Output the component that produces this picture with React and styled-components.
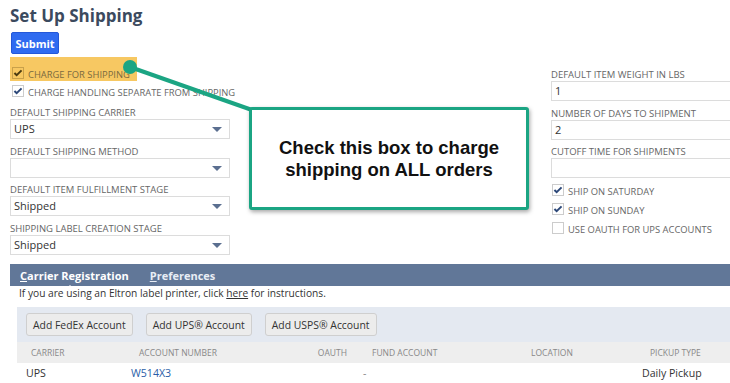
import React from 'react';
import styled, { createGlobalStyle } from 'styled-components';

const GlobalStyle = createGlobalStyle`
  html, body {
    margin: 0;
    padding: 0;
    background: #fff;
    overflow: hidden;
  }
  body {
    font-family: "Open Sans", "Noto Sans", sans-serif;
    color: #333;
  }
`;

const Page = styled.div`
  position: relative;
  width: 730px;
  height: 383px;
  overflow: hidden;
  padding-left: 10px;
  box-sizing: border-box;
`;

const Title = styled.h1`
  margin: 0;
  padding-top: 4px;
  font-size: 17px;
  line-height: 24px;
  font-weight: 700;
  color: #3b4a5e;
`;

const SubmitButton = styled.button`
  display: block;
  margin-top: 4px;
  margin-left: 1px;
  width: 48px;
  height: 22px;
  padding: 0;
  border: 1px solid #2458d8;
  border-radius: 2px;
  background: #2f6bf0;
  color: #fff;
  font-family: inherit;
  font-size: 11px;
  font-weight: 700;
`;

const Form = styled.div`
  display: flex;
  margin-top: 3px;
`;

const LeftColumn = styled.div`
  width: 220px;
`;

const RightColumn = styled.div`
  margin-left: auto;
  width: 190px;
  padding-top: 12px;
  margin-right: -11px;
`;

const Highlight = styled.div`
  width: 127px;
  height: 24px;
  background: #f7c862;
`;

const CheckRow = styled.div`
  display: flex;
  align-items: flex-end;
  box-sizing: border-box;
  height: ${p => p.$h || 19}px;
  padding-left: ${p => p.$indent || 0}px;
  padding-bottom: ${p => p.$pb || 0}px;
  font-size: 9.4px;
  line-height: 12px;
  color: ${p => (p.$dark ? '#7a6a40' : '#666')};
  white-space: nowrap;
`;

const Box = styled.span`
  flex: none;
  box-sizing: border-box;
  width: 12px;
  height: 12px;
  margin-right: 4px;
  margin-bottom: 2px;
  border: 1px solid ${p => (p.$dark ? '#c9a14a' : '#ccc')};
  background: ${p => (p.$dark ? 'transparent' : '#fff')};
  display: flex;
  align-items: center;
  justify-content: center;
`;

const Field = styled.div`
  margin-bottom: ${p => p.$mb ?? 6.5}px;
`;

const Label = styled.div`
  font-size: 9.5px;
  line-height: 12px;
  color: #666;
  white-space: nowrap;
`;

const Input = styled.div`
  position: relative;
  height: 18px;
  border: 1px solid #dcdcdc;
  background: #fff;
  font-size: 11px;
  line-height: 18px;
  padding-left: 3px;
  color: #333;
`;

const Arrow = styled.span`
  position: absolute;
  right: 7px;
  top: 7px;
  width: 0;
  height: 0;
  border-left: 5px solid transparent;
  border-right: 5px solid transparent;
  border-top: 5px solid #5b6f90;
`;

const TabBar = styled.div`
  position: relative;
  margin-top: 3px;
  height: 22px;
  background: #617798;
  display: flex;
  align-items: center;
  padding-left: 10px;
  gap: 21px;
  margin-right: -10px;
`;

const Tab = styled.span`
  position: relative;
  font-size: 11px;
  font-weight: 700;
  color: ${p => (p.$active ? '#fff' : '#e8edf5')};
  span { text-decoration: underline; }
`;

const Notch = styled.i`
  position: absolute;
  left: 50%;
  bottom: -6px;
  margin-left: -8px;
  border-left: 4px solid transparent;
  border-right: 4px solid transparent;
  border-bottom: 4px solid #fff;
`;

const HelpText = styled.div`
  padding-left: 9px;
  font-size: 10.2px;
  line-height: 15px;
  color: #333;
  a { color: #333; text-decoration: underline; }
`;

const ButtonStrip = styled.div`
  margin: 6px -10px 0 7px;
  height: 35px;
  background: #e4e9f1;
  display: flex;
  align-items: center;
  gap: 13px;
  padding-left: 9px;
`;

const GrayButton = styled.button`
  height: 23px;
  padding: 0 6px;
  border: 1px solid #cfcfcf;
  border-radius: 3px;
  background: #ececec;
  color: #333;
  font-family: inherit;
  font-size: 10.4px;
`;

const Table = styled.div`
  margin: 0 -10px 0 7px;
`;

const Row = styled.div`
  display: grid;
  grid-template-columns: 108px 140px 90px 160px 118px 90px;
  height: ${p => (p.$head ? 21 : 20)}px;
  align-items: center;
  background: ${p => (p.$head ? '#eeeeee' : '#fff')};
  font-size: ${p => (p.$head ? 8.5 : 10.6)}px;
  color: ${p => (p.$head ? '#888' : '#333')};
`;

const Cell = styled.div`
  padding-left: ${p => p.$pl || 0}px;
  padding-right: ${p => p.$pr || 0}px;
  text-align: ${p => p.$align || 'left'};
  color: ${p => p.$color || 'inherit'};
  white-space: nowrap;
`;

const Callout = styled.div`
  position: absolute;
  left: 249px;
  top: 107px;
  width: 274px;
  height: 97px;
  border: 3px solid #1ba583;
  border-radius: 3px;
  background: #fff;
  box-shadow: 1px 2px 4px rgba(0, 0, 0, 0.35);
  display: flex;
  align-items: center;
  justify-content: center;
  text-align: center;
  font-family: "Liberation Sans", Arial, sans-serif;
  font-weight: 700;
  font-size: 18.5px;
  line-height: 22px;
  color: #111;
`;

const Connector = styled.svg`
  position: absolute;
  left: 0;
  top: 0;
  pointer-events: none;
`;

const Check = ({ color = '#2b4778' }) => (
  <svg width="10" height="8" viewBox="0 0 11 9">
    <path d="M1.5 4.5 L4 7 L9.5 1.5" fill="none" stroke={color} strokeWidth="2.2" />
  </svg>
);

const CheckBox = ({ checked, dark }) => (
  <Box $dark={dark}>{checked && <Check color={dark ? '#4a3a10' : '#2b4778'} />}</Box>
);

const SelectField = ({ label, value }) => (
  <Field>
    <Label>{label}</Label>
    <Input>
      {value}
      <Arrow />
    </Input>
  </Field>
);

const TextField = ({ label, value, mb }) => (
  <Field $mb={mb}>
    <Label>{label}</Label>
    <Input>{value}</Input>
  </Field>
);

export default function App() {
  return (
    <Page>
      <GlobalStyle />
      <Title>Set Up Shipping</Title>
      <SubmitButton>Submit</SubmitButton>
      <Form>
        <LeftColumn>
          <Highlight>
            <CheckRow $h={24} $indent={2} $dark>
              <CheckBox checked dark />
              CHARGE FOR SHIPPING
            </CheckRow>
          </Highlight>
          <CheckRow $h={19} $indent={2} $pb={1}>
            <CheckBox checked />
            CHARGE HANDLING SEPARATE FROM SHIPPING
          </CheckRow>
          <div style={{ height: 7 }} />
          <SelectField label="DEFAULT SHIPPING CARRIER" value="UPS" />
          <SelectField label="DEFAULT SHIPPING METHOD" value="" />
          <SelectField label="DEFAULT ITEM FULFILLMENT STAGE" value="Shipped" />
          <SelectField label="SHIPPING LABEL CREATION STAGE" value="Shipped" />
        </LeftColumn>
        <RightColumn>
          <TextField label="DEFAULT ITEM WEIGHT IN LBS" value="1" />
          <TextField label="NUMBER OF DAYS TO SHIPMENT" value="2" />
          <TextField label="CUTOFF TIME FOR SHIPMENTS" value="" mb={2} />
          <CheckRow $h={19} $indent={1} $pb={1}>
            <CheckBox checked />
            SHIP ON SATURDAY
          </CheckRow>
          <CheckRow $h={19} $indent={1} $pb={1}>
            <CheckBox checked />
            SHIP ON SUNDAY
          </CheckRow>
          <CheckRow $h={18.5} $indent={1} $pb={1}>
            <CheckBox />
            USE OAUTH FOR UPS ACCOUNTS
          </CheckRow>
        </RightColumn>
      </Form>
      <TabBar>
        <Tab $active>
          <span>C</span>arrier Registration
          <Notch />
        </Tab>
        <Tab>
          <span>P</span>references
        </Tab>
      </TabBar>
      <HelpText>
        If you are using an Eltron label printer, click <a>here</a> for instructions.
      </HelpText>
      <ButtonStrip>
        <GrayButton>Add FedEx Account</GrayButton>
        <GrayButton>Add UPS® Account</GrayButton>
        <GrayButton>Add USPS® Account</GrayButton>
      </ButtonStrip>
      <Table>
        <Row $head>
          <Cell $pl={14}>CARRIER</Cell>
          <Cell $pl={14}>ACCOUNT NUMBER</Cell>
          <Cell $align="right" $pr={8}>OAUTH</Cell>
          <Cell $pl={17}>FUND ACCOUNT</Cell>
          <Cell $pl={16}>LOCATION</Cell>
          <Cell $pl={17}>PICKUP TYPE</Cell>
        </Row>
        <Row>
          <Cell $pl={9}>UPS</Cell>
          <Cell $pl={6} $color="#2a5ea8">W514X3</Cell>
          <Cell />
          <Cell $pl={8} $color="#888">-</Cell>
          <Cell />
          <Cell $pl={9}>Daily Pickup</Cell>
        </Row>
      </Table>
      <Connector width="730" height="383" viewBox="0 0 730 383">
        <line x1="130" y1="67" x2="252" y2="110" stroke="#1ba583" strokeWidth="4" />
        <circle cx="130" cy="67" r="7" fill="#1ba583" />
      </Connector>
      <Callout>
        Check this box to charge
        <br />
        shipping on ALL orders
      </Callout>
    </Page>
  );
}
